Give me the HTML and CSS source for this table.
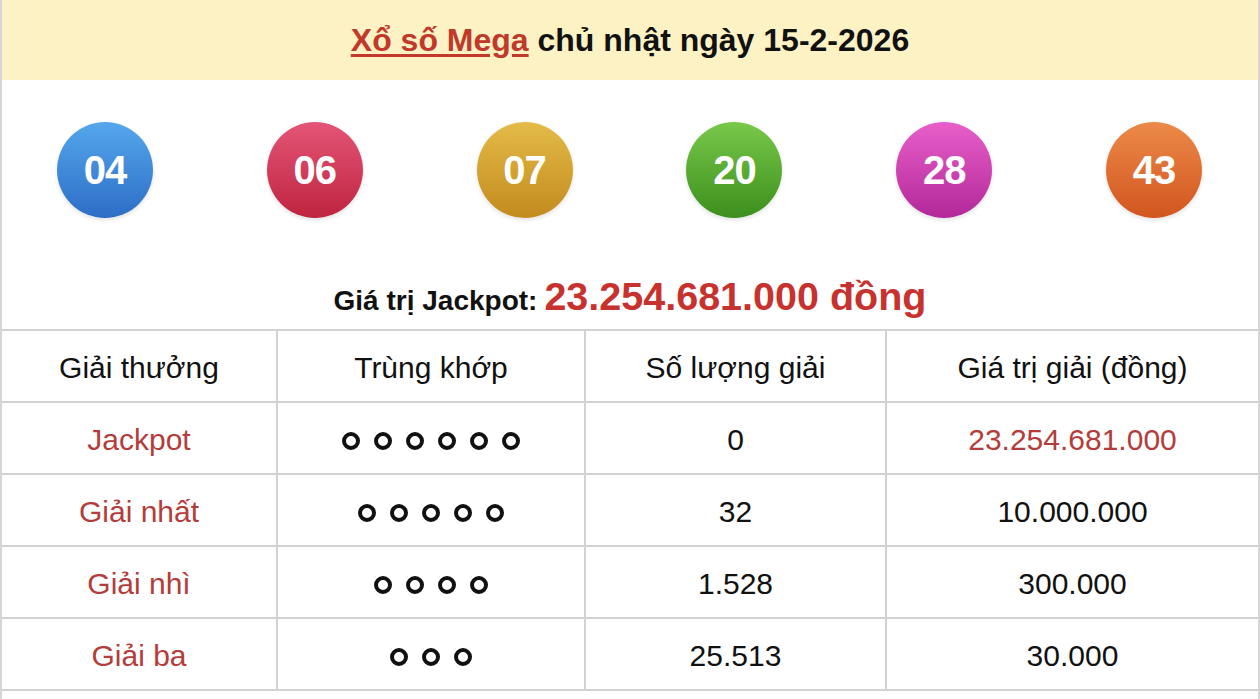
FILE: index.html
```html
<!DOCTYPE html>
<html lang="vi">
<head>
<meta charset="utf-8">
<link rel="stylesheet" href="styles.css">
</head>
<body>
<div class="wrap">
  <div class="head">
    <h1 class="title"><a class="title-link" href="#">Xổ số Mega</a> chủ nhật ngày 15-2-2026</h1>
  </div>
  <div class="balls">
    <span class="ball b-blue">04</span>
    <span class="ball b-red">06</span>
    <span class="ball b-gold">07</span>
    <span class="ball b-green">20</span>
    <span class="ball b-pink">28</span>
    <span class="ball b-orange">43</span>
  </div>
  <div class="jackpot">
    <span class="jp-label">Giá trị Jackpot:</span>
    <span class="jp-value">23.254.681.000 đồng</span>
  </div>
  <table class="prizes">
    <colgroup>
      <col class="c1"><col class="c2"><col class="c3"><col class="c4">
    </colgroup>
    <thead>
      <tr><th>Giải thưởng</th><th>Trùng khớp</th><th>Số lượng giải</th><th>Giá trị giải (đồng)</th></tr>
    </thead>
    <tbody>
      <tr>
        <td class="red">Jackpot</td>
        <td><span class="dots"><i></i><i></i><i></i><i></i><i></i><i></i></span></td>
        <td>0</td>
        <td class="red">23.254.681.000</td>
      </tr>
      <tr>
        <td class="red">Giải nhất</td>
        <td><span class="dots"><i></i><i></i><i></i><i></i><i></i></span></td>
        <td>32</td>
        <td>10.000.000</td>
      </tr>
      <tr>
        <td class="red">Giải nhì</td>
        <td><span class="dots"><i></i><i></i><i></i><i></i></span></td>
        <td>1.528</td>
        <td>300.000</td>
      </tr>
      <tr>
        <td class="red">Giải ba</td>
        <td><span class="dots"><i></i><i></i><i></i></span></td>
        <td>25.513</td>
        <td>30.000</td>
      </tr>
    </tbody>
  </table>
</div>
</body>
</html>
```

FILE: styles.css
```css
html, body {
  margin: 0;
  padding: 0;
  background: #fff;
}
body {
  font-family: "Liberation Sans", Arial, sans-serif;
  color: #111;
}
.wrap {
  width: 1256px;
  border-left: 2px solid #d6d6d6;
  border-right: 2px solid #d6d6d6;
  min-height: 699px;
}
.head {
  height: 80px;
  background: #fdf2c4;
  display: flex;
  align-items: center;
  justify-content: center;
}
.title {
  margin: 0;
  font-size: 32px;
  font-weight: bold;
  color: #111;
}
.title-link {
  color: #c0392b;
  text-decoration: underline;
  text-underline-offset: 3px;
}
.balls {
  display: flex;
  justify-content: space-between;
  padding: 42px 56px 0 55px;
}
.ball {
  width: 96px;
  height: 96px;
  border-radius: 50%;
  display: flex;
  align-items: center;
  justify-content: center;
  color: #fff;
  font-weight: bold;
  font-size: 40px;
  letter-spacing: -1px;
  box-shadow: 0 2px 4px rgba(0,0,0,0.12);
}
.b-blue { background: linear-gradient(#55a7ec, #2d6dc6); }
.b-red { background: linear-gradient(#e45577, #bf243f); }
.b-gold { background: linear-gradient(#e4bb48, #c28b1d); }
.b-green { background: linear-gradient(#78c84a, #3c8f1d); }
.b-pink { background: linear-gradient(#e85fca, #b3289a); }
.b-orange { background: linear-gradient(#ec8a48, #d2551f); }
.jackpot {
  margin-top: 56px;
  height: 55px;
  display: flex;
  align-items: baseline;
  justify-content: center;
  gap: 7px;
}
.jp-label {
  font-size: 28px;
  font-weight: bold;
  color: #111;
}
.jp-value {
  font-size: 39.5px;
  font-weight: bold;
  color: #c8322e;
}
.prizes {
  width: 1256px;
  border-collapse: collapse;
  table-layout: fixed;
}
.c1 { width: 275px; }
.c2 { width: 308px; }
.c3 { width: 301px; }
.c4 { width: 372px; }
.prizes th, .prizes td {
  border: 2px solid #d2d2d2;
  height: 67px;
  padding: 3px 0 0;
  text-align: center;
  font-size: 30px;
  font-weight: normal;
  color: #111;
}
.prizes tr > :first-child { border-left: none; }
.prizes tr > :last-child { border-right: none; }
.prizes td.red { color: #b43c3a; }
.dots {
  display: inline-flex;
  gap: 14px;
  vertical-align: middle;
  position: relative;
  top: -1px;
}
.dots i {
  flex: none;
  width: 10px;
  height: 10px;
  border: 4.5px solid #111;
  border-radius: 50%;
}
```
